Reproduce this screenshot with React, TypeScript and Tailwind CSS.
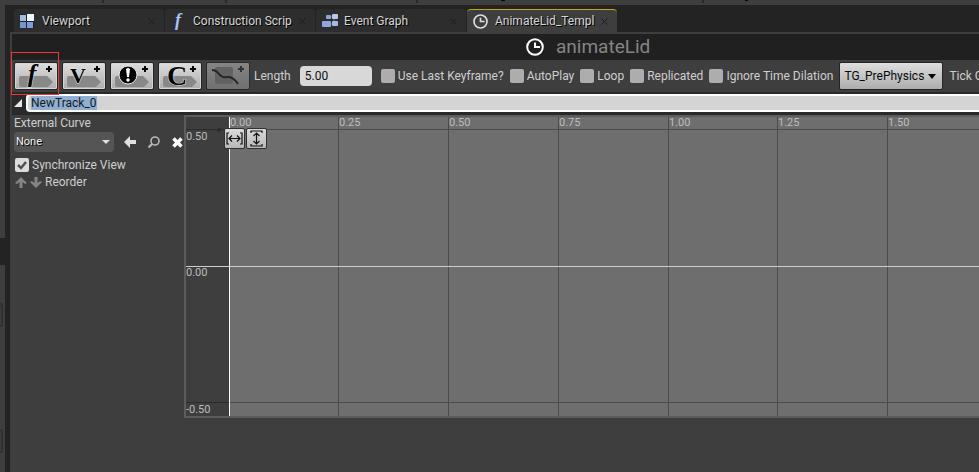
import { useEffect, useRef } from "react";
import type { ReactNode } from "react";

function ClockIcon({ size, color }: { size: number; color: string }) {
  return (
    <svg width={size} height={size} viewBox="0 0 18 18" fill="none" stroke={color} strokeWidth="2" className="shrink-0">
      <circle cx="9" cy="9" r="7.8" />
      <path d="M9 4.5V9h5" />
    </svg>
  );
}

function ViewportIcon() {
  return (
    <svg width="14" height="14" viewBox="0 0 14 14" className="shrink-0">
      <rect x="0" y="0" width="14" height="14" fill="#1b2030" />
      <rect x="0" y="1" width="6" height="6" fill="#a3bcd9" />
      <rect x="7" y="0" width="7" height="7" fill="#eef5fc" />
      <rect x="0" y="8" width="6" height="6" fill="#7895cf" />
      <rect x="7" y="8" width="6" height="6" fill="#7f9bdb" />
    </svg>
  );
}

function FunctionIcon() {
  return (
    <svg width="14" height="18" viewBox="0 0 14 18" className="shrink-0 overflow-visible">
      <text x="4" y="14" fontSize="18" fontStyle="italic" fontWeight="bold" fontFamily="Liberation Serif, serif" fill="#a9c1f5">
        f
      </text>
    </svg>
  );
}

function GraphIcon() {
  return (
    <svg width="17" height="14" viewBox="0 0 17 14" className="shrink-0">
      <path d="M7 3h4M7 10h4M12 5v3" stroke="#65718f" />
      <rect x="4" y="1" width="5" height="4" rx="1" fill="#8ea5d6" />
      <rect x="10" y="0" width="6" height="5" rx="1" fill="#b8c9e8" />
      <rect x="0" y="7" width="9" height="6" rx="1" fill="#8fa6df" />
      <rect x="10" y="7" width="6" height="5" rx="1" fill="#a8bae4" />
    </svg>
  );
}

function Tab({ icon, label, active = false }: { icon: ReactNode; label: string; active?: boolean }) {
  return (
    <div
      className={
        active
          ? "flex h-[23px] w-[150px] shrink-0 items-center rounded-t-sm border-t border-[#c9a900] bg-[#3e3e3e] pr-[9px] pl-[6px]"
          : "flex h-[23px] w-[150px] shrink-0 items-center rounded-t-sm border-t border-[#2d2d2d] bg-[#2d2d2d] pr-[9px] pl-[6px]"
      }
    >
      <button type="button" className="flex min-w-0 flex-1 items-center text-left text-[#d6d6d6]">
        <span className="flex w-[22px] shrink-0 items-center">{icon}</span>
        <span className="whitespace-nowrap [text-shadow:1px_1px_0_#000]">{label}</span>
      </button>
      <button type="button" aria-label={"Close " + label} className="shrink-0">
        <svg width="7" height="7" viewBox="0 0 7 7" stroke="#1c1c1c">
          <path d="M.5.5l6 6M6.5.5l-6 6" />
        </svg>
      </button>
    </div>
  );
}

function TrackButton({ label, children, disabled = false }: { label: string; children: ReactNode; disabled?: boolean }) {
  return (
    <button
      type="button"
      aria-label={label}
      disabled={disabled}
      className={
        disabled
          ? "h-[28px] w-[44px] shrink-0 rounded-xs border border-[#2b2b2b] bg-linear-to-b from-[#858585] to-[#707070]"
          : "h-[28px] w-[44px] shrink-0 rounded-xs border border-[#242424] bg-linear-to-b from-[#dedede] to-[#adadad] shadow-[inset_0_0_0_1px_#d5d5d5]"
      }
    >
      <svg width="42" height="26" viewBox="0 0 42 26" className="overflow-visible">
        {!disabled && <path d="M4 15q0-2 2-2h26l6 6-5 5H6q-2 0-2-2z" fill="#888888" />}
        {children}
        <path d="M31 6h6M34 3v6" stroke={disabled ? "#333333" : "#050505"} strokeWidth="2" />
      </svg>
    </button>
  );
}

function Letter({ children, italic = false, x, y, size }: { children: string; italic?: boolean; x: number; y: number; size: number }) {
  return (
    <text
      x={x}
      y={y}
      textAnchor="middle"
      fontFamily="Liberation Serif, serif"
      fontWeight="bold"
      fontStyle={italic ? "italic" : "normal"}
      fontSize={size}
      fill="#050505"
      stroke="#e8e8e8"
      strokeWidth="1"
      paintOrder="stroke"
    >
      {children}
    </text>
  );
}

function Check({ label }: { label: string }) {
  return (
    <label className="flex shrink-0 items-center gap-[3px] whitespace-nowrap">
      <input type="checkbox" className="size-[14px] appearance-none rounded-xs bg-[#adadad] checked:bg-[#e8e8e8]" />
      {label}
    </label>
  );
}

const STEP_LABELS = Array.from({ length: 21 }, (_, i) => (i * 0.25).toFixed(2));
const stepX = (i: number) => Math.round(42.7 + i * 109.7);

function CurveGraph() {
  return (
    <svg className="block h-[299px] w-full bg-[#6e6e6e] text-[11px]" shapeRendering="crispEdges" role="img" aria-label="Float curve">
      <rect width="43" height="299" fill="#3e3e3e" />
      <rect y="12" width="43" height="1" fill="#2c2c2c" />
      <rect y="285" width="43" height="1" fill="#2c2c2c" />
      <rect x="43" y="12" width="100%" height="1" fill="#4b4b4b" />
      <rect x="43" y="285" width="100%" height="1" fill="#4b4b4b" />
      {STEP_LABELS.slice(1).map((label, i) => (
        <rect key={label} x={stepX(i + 1)} width="1" height="299" fill="#4b4b4b" />
      ))}
      <rect y="149" width="100%" height="1" fill="#cfcfcf" />
      <rect x="43" width="1" height="299" fill="#ffffff" />
      <circle cx="33" cy="13" r="2" fill="#2c2c2c" />
      <g fill="#bdbdbd">
        {STEP_LABELS.map((label, i) => (
          <text key={label} x={stepX(i) + 1} y="9">
            {label}
          </text>
        ))}
        <text x="0" y="23">0.50</text>
        <text x="0" y="159">0.00</text>
        <text x="0" y="296">-0.50</text>
      </g>
    </svg>
  );
}

const fitButton =
  "flex size-[21px] items-center justify-center rounded-xs border border-[#303030] bg-linear-to-b from-[#dadada] to-[#b8b8b8]";

export default function App() {
  const nameRef = useRef<HTMLInputElement>(null);
  useEffect(() => {
    nameRef.current?.focus();
    nameRef.current?.select();
  }, []);

  return (
    <div className="flex min-h-screen overflow-hidden bg-[#3e3e3e] font-[Roboto,sans-serif] text-[12px] leading-[14px] text-[#cfcfcf]">
      <aside className="flex w-[5px] shrink-0 flex-col overflow-hidden">
        <div className="mt-[238px] h-[27px] bg-[#232323]" />
        <div className="mt-[38px] h-[24px] w-[3px] rounded-r-sm border-2 border-l-0 border-[#303030]" />
        <div className="mt-[102px] h-[24px] w-[3px] rounded-r-sm border-2 border-l-0 border-[#303030]" />
      </aside>
      <div className="flex min-w-0 flex-1 flex-col">
        <div className="flex h-[5px] items-start pl-[97px]">
          <span className="h-[3px] w-[2px] bg-[#292929]" />
          <span className="ml-[121px] h-[3px] w-[2px] bg-[#292929]" />
          <span className="ml-[189px] h-[3px] w-[2px] bg-[#292929]" />
          <span className="ml-[83px] h-px w-[4px] bg-[#050505]" />
          <span className="ml-[197px] h-[3px] w-[2px] bg-[#292929]" />
          <span className="ml-[41px] h-px w-[3px] bg-[#050505]" />
        </div>
        <div className="flex flex-1 border-l-[5px] border-[#232323]">
          <main className="flex min-w-0 flex-1 flex-col">
            <nav className="flex h-[27px] items-end gap-px bg-[#232323] pl-[4px]">
              <Tab icon={<ViewportIcon />} label="Viewport" />
              <Tab icon={<FunctionIcon />} label="Construction Scrip" />
              <Tab icon={<GraphIcon />} label="Event Graph" />
              <Tab icon={<ClockIcon size={15} color="#dddddd" />} label="AnimateLid_Templ" active />
            </nav>
            <div className="mt-[2px] ml-[2px] flex flex-col">
              <header className="flex h-[26px] items-center gap-[12px] bg-[#202020] pl-[514px]">
                <ClockIcon size={18} color="#ffffff" />
                <h1 className="text-[19px] leading-[26px] text-[#858585]">animateLid</h1>
              </header>

              <div className="flex h-[32px] items-center gap-[4px] overflow-hidden pl-[2px]">
                <TrackButton label="Add float track">
                  <Letter italic x={17} y={19} size={26}>f</Letter>
                </TrackButton>
                <TrackButton label="Add vector track">
                  <Letter x={15} y={20} size={22}>V</Letter>
                </TrackButton>
                <TrackButton label="Add event track">
                  <circle cx="17" cy="12" r="9" fill="#050505" stroke="#e8e8e8" />
                  <path d="M15 6q2-2 4 0l-1 8h-2z" fill="#fff" />
                  <circle cx="17" cy="17" r="1.7" fill="#fff" />
                </TrackButton>
                <TrackButton label="Add color track">
                  <Letter x={18} y={22} size={28}>C</Letter>
                </TrackButton>
                <TrackButton label="Add external asset" disabled>
                  <rect x="8" y="4" width="18" height="17" rx="2" fill="#626262" />
                  <path d="M5 7q4 0 7 4t8 3q6-1 11 7" fill="none" stroke="#252525" strokeWidth="2" />
                </TrackButton>
                <label className="flex shrink-0 items-center gap-[9px]">
                  Length
                  <input
                    type="text"
                    defaultValue="5.00"
                    className="h-[20px] w-[72px] rounded-sm bg-[#d8d8d8] px-[5px] text-[#101010] outline-none"
                  />
                </label>
                <div className="ml-[5px] flex shrink-0 items-center gap-[6px]">
                  <Check label="Use Last Keyframe?" />
                  <Check label="AutoPlay" />
                  <Check label="Loop" />
                  <Check label="Replicated" />
                  <Check label="Ignore Time Dilation" />
                  <div className="relative shrink-0">
                    <select
                      aria-label="Tick group"
                      className="block h-[28px] w-[104px] appearance-none rounded-xs border border-[#242424] bg-linear-to-b from-[#dedede] to-[#adadad] pl-[4px] text-[#080808]"
                    >
                      <option>TG_PrePhysics</option>
                    </select>
                    <svg width="8" height="5" viewBox="0 0 8 5" className="pointer-events-none absolute top-[12px] right-[7px]">
                      <path d="M0 0h8L4 5z" fill="#080808" />
                    </svg>
                  </div>
                  <span className="whitespace-nowrap">Tick Group</span>
                </div>
              </div>

              <div className="flex h-[23px] border-t-2 border-b-3 border-[#292929] bg-[#292929]">
                <button type="button" aria-label="Collapse track" className="flex w-[14px] items-center pl-[2px]">
                  <svg width="8" height="8" viewBox="0 0 8 8">
                    <path d="M8 0v8H0z" fill="#e6e6e6" />
                  </svg>
                </button>
                <input
                  ref={nameRef}
                  type="text"
                  aria-label="Track name"
                  defaultValue="NewTrack_0"
                  className="min-w-0 flex-1 rounded-l-sm border-2 border-r-0 border-white bg-[#d4d4d4] px-[3px] text-[#1a1a1a] outline-none selection:bg-[#8fb0d3] selection:text-[#1a1a1a]"
                />
              </div>

              <section className="flex">
                <div className="flex w-[172px] shrink-0 flex-col pl-[2px]">
                  <label htmlFor="curve" className="pb-px leading-[16px]">
                    External Curve
                  </label>
                  <div className="flex items-center">
                    <div className="relative">
                      <select
                        id="curve"
                        className="block h-[20px] w-[100px] appearance-none rounded-sm bg-[#555555] px-[2px] text-[11px] text-[#f0f0f0] [text-shadow:1px_1px_0_#000]"
                      >
                        <option>None</option>
                      </select>
                      <svg width="8" height="4" viewBox="0 0 8 4" className="pointer-events-none absolute top-[8px] right-[4px]">
                        <path d="M0 0h8L4 4z" fill="#e0e0e0" />
                      </svg>
                    </div>
                    <button type="button" aria-label="Use selected asset" className="ml-[10px]">
                      <svg width="12" height="12" viewBox="0 0 12 12">
                        <path d="M0 6l6-6v4h6v4H6v4z" fill="#e0e0e0" />
                      </svg>
                    </button>
                    <button type="button" aria-label="Browse to asset" className="ml-[12px]">
                      <svg width="12" height="12" viewBox="0 0 12 12" fill="none" stroke="#b8b8b8" strokeWidth="1.6">
                        <circle cx="7" cy="5" r="4" />
                        <path d="M4 8l-3.5 3.5" strokeWidth="2.2" />
                      </svg>
                    </button>
                    <button type="button" aria-label="Clear" className="ml-[12px]">
                      <svg width="11" height="11" viewBox="0 0 11 11" stroke="#ffffff" strokeWidth="3.5">
                        <path d="M1.5 1.5l8 8M9.5 1.5l-8 8" />
                      </svg>
                    </button>
                  </div>
                  <label className="mt-[4px] flex items-center gap-[3px] pl-px">
                    <span className="relative flex">
                      <input type="checkbox" defaultChecked className="size-[14px] appearance-none rounded-xs bg-[#dcdcdc]" />
                      <svg width="14" height="14" viewBox="0 0 14 14" className="pointer-events-none absolute inset-0">
                        <path d="M3 7l3 3 5-6" fill="none" stroke="#505050" strokeWidth="2.5" />
                      </svg>
                    </span>
                    <span className="leading-[18px]">Synchronize View</span>
                  </label>
                  <div className="flex items-center gap-[3px] pl-px leading-[16px]">
                    <button type="button" aria-label="Move track up">
                      <svg width="12" height="11" viewBox="0 0 12 11">
                        <path d="M6 0l6 6-2 1-2.500-2v6h-3V5L2 7 0 6z" fill="#858585" />
                      </svg>
                    </button>
                    <button type="button" aria-label="Move track down">
                      <svg width="12" height="11" viewBox="0 0 12 11">
                        <path d="M6 11l6-6-2-1-2.500 2V0h-3v6L2 4 0 5z" fill="#858585" />
                      </svg>
                    </button>
                    <span>Reorder</span>
                  </div>
                </div>
                <div className="relative min-w-0 flex-1 border-2 border-r-0 border-[#5c5c5c]">
                  <CurveGraph />
                  <div className="absolute top-[11px] left-[38px] flex gap-px">
                    <button type="button" aria-label="Zoom to fit horizontal" className={fitButton}>
                      <svg width="17" height="13" viewBox="0 0 17 13" fill="none" stroke="#101010" strokeWidth="1.2">
                        <path d="M3 1H1v11h2M14 1h2v11h-2M3 6.5h11M6 3.5l-3 3 3 3M11 3.5l3 3-3 3" />
                      </svg>
                    </button>
                    <button type="button" aria-label="Zoom to fit vertical" className={fitButton}>
                      <svg width="13" height="17" viewBox="0 0 13 17" fill="none" stroke="#101010" strokeWidth="1.2">
                        <path d="M1 3V1h11v2M1 14v2h11v-2M6.5 3v11M3.5 6l3-3 3 3M3.5 11l3 3 3-3" />
                      </svg>
                    </button>
                  </div>
                </div>
              </section>
            </div>
          </main>
        </div>
      </div>
      <div className="pointer-events-none absolute top-[52px] left-[11px] h-[43px] w-[48px] border border-[#f03434]" />
    </div>
  );
}
